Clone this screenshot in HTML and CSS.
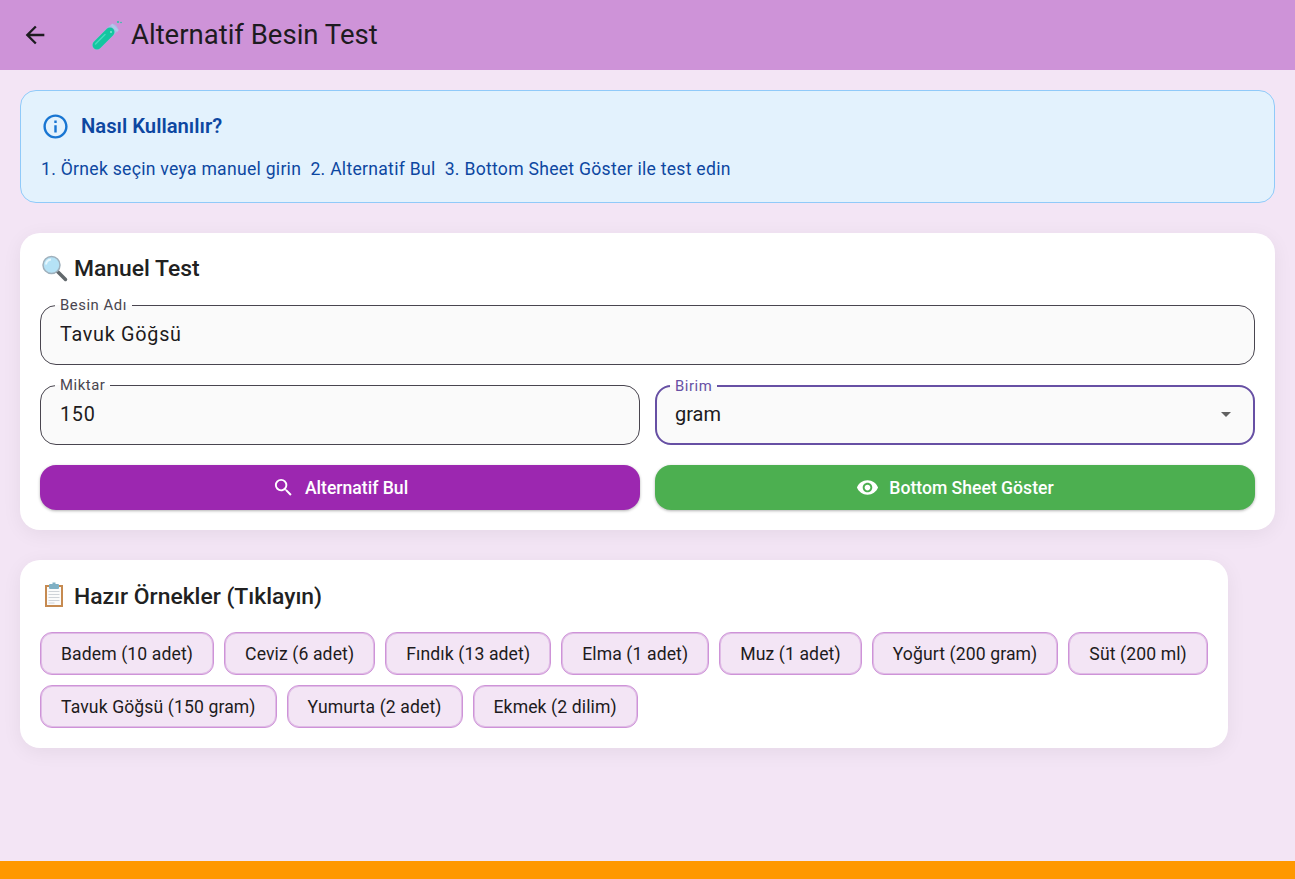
FILE: index.html
```html
<!DOCTYPE html>
<html lang="tr">
<head>
    <meta charset="UTF-8">
    <title>Alternatif Besin Test</title>
    <link rel="stylesheet" href="styles.css">
</head>
<body>
    <header class="app-bar">
        <button class="back-btn" type="button" aria-label="Geri">
            <svg width="28" height="28" viewBox="0 0 24 24"><path d="M20 11H7.830l5.590-5.590L12 4l-8 8 8 8 1.410-1.410L7.830 13H20v-2z"/></svg>
        </button>
        <h1 class="app-title">
            <svg class="emoji-tube" width="31" height="31" viewBox="0 0 31 31" fill="none" stroke-linecap="round">
                <path d="M6 25L22 9" stroke="#a9bde4" stroke-width="9.500"/>
                <path d="M6 25L19 12" stroke="#13c6a0" stroke-width="9"/>
                <path d="M4.500 24L14 14.500" stroke="#46dcbd" stroke-width="1.500"/>
                <path d="M20.500 4.500l6.500 6.500" stroke="#b4c6ea" stroke-width="2.500" stroke-linecap="butt"/>
                <circle cx="20" cy="12" r="1" fill="#7fe6d0"/>
                <circle cx="27" cy="2" r="1.100" fill="#26c6a6"/>
                <circle cx="30" cy="2.500" r=".8" fill="#26c6a6"/>
            </svg>
            Alternatif Besin Test
        </h1>
    </header>

    <main class="content">
        <section class="info-box">
            <div class="info-head">
                <svg width="29" height="29" viewBox="0 0 24 24" fill="#1976d2"><path d="M11 7h2v2h-2zm0 4h2v6h-2zm1-9C6.480 2 2 6.480 2 12s4.480 10 10 10 10-4.480 10-10S17.520 2 12 2zm0 18c-4.410 0-8-3.590-8-8s3.590-8 8-8 8 3.590 8 8-3.590 8-8 8z"/></svg>
                <span>Nasıl Kullanılır?</span>
            </div>
            <p class="info-text">1. Örnek seçin veya manuel girin&nbsp; 2. Alternatif Bul&nbsp; 3. Bottom Sheet Göster ile test edin</p>
        </section>

        <section class="card">
            <h2 class="card-title">
                <svg width="28" height="28" viewBox="0 0 28 28" fill="none">
                    <path d="M17.500 17.500l8 8" stroke="#62686c" stroke-width="3.500" stroke-linecap="round"/>
                    <circle cx="11.500" cy="11" r="8.500" fill="#b5e2f6" stroke="#9fb0bc" stroke-width="1.500"/>
                    <path d="M6 10.500a5.500 5.500 0 0 1 5-5" stroke="#e6f7fd" stroke-width="2"/>
                </svg>
                Manuel Test
            </h2>

            <fieldset class="field">
                <legend>Besin Adı</legend>
                <input type="text" value="Tavuk Göğsü">
            </fieldset>

            <div class="two-col">
                <fieldset class="field">
                    <legend>Miktar</legend>
                    <input type="text" value="150">
                </fieldset>
                <fieldset class="field field-focus">
                    <legend>Birim</legend>
                    <div class="select-value">
                        <span>gram</span>
                        <svg width="24" height="24" viewBox="0 0 24 24" fill="#616161"><path d="M7 10l5 5 5-5z"/></svg>
                    </div>
                </fieldset>
            </div>

            <div class="two-col">
                <button class="btn btn-purple" type="button">
                    <svg width="23" height="23" viewBox="0 0 24 24" fill="#fff"><path d="M15.500 14h-.79l-.28-.27A6.471 6.471 0 0 0 16 9.500 6.500 6.500 0 1 0 9.500 16c1.610 0 3.090-.59 4.230-1.570l.27.28v.79l5 4.990L20.490 19l-4.990-5zm-6 0C7.010 14 5 11.990 5 9.500S7.010 5 9.500 5 14 7.010 14 9.500 11.990 14 9.500 14z"/></svg>
                    Alternatif Bul
                </button>
                <button class="btn btn-green" type="button">
                    <svg width="23" height="23" viewBox="0 0 24 24" fill="#fff"><path d="M12 4.500C7 4.500 2.730 7.610 1 12c1.730 4.390 6 7.500 11 7.500s9.270-3.110 11-7.500c-1.730-4.390-6-7.500-11-7.500zM12 17c-2.760 0-5-2.240-5-5s2.240-5 5-5 5 2.240 5 5-2.240 5-5 5zm0-8c-1.660 0-3 1.340-3 3s1.340 3 3 3 3-1.340 3-3-1.340-3-3-3z"/></svg>
                    Bottom Sheet Göster
                </button>
            </div>
        </section>

        <section class="card card-examples">
            <h2 class="card-title">
                <svg width="28" height="28" viewBox="0 0 28 28">
                    <rect x="5" y="3" width="18" height="22" fill="#c68a50"/>
                    <rect x="7" y="5" width="14" height="18" fill="#fbfbfb"/>
                    <rect x="9" y="2" width="10" height="5" rx="1" fill="#7fb0c4"/>
                    <rect x="12.500" y="0.500" width="3" height="2" fill="#7fb0c4"/>
                    <path d="M8.500 9.500h11M8.500 12.500h11M8.500 15.500h11M8.500 18.500h11M8.500 21h6" stroke="#cfd3d8" stroke-width="1"/>
                </svg>
                Hazır Örnekler (Tıklayın)
            </h2>
            <div class="chips">
                <button class="chip" type="button">Badem (10 adet)</button>
                <button class="chip" type="button">Ceviz (6 adet)</button>
                <button class="chip" type="button">Fındık (13 adet)</button>
                <button class="chip" type="button">Elma (1 adet)</button>
                <button class="chip" type="button">Muz (1 adet)</button>
                <button class="chip" type="button">Yoğurt (200 gram)</button>
                <button class="chip" type="button">Süt (200 ml)</button>
                <button class="chip" type="button">Tavuk Göğsü (150 gram)</button>
                <button class="chip" type="button">Yumurta (2 adet)</button>
                <button class="chip" type="button">Ekmek (2 dilim)</button>
            </div>
        </section>
    </main>

    <div class="bottom-strip"></div>
</body>
</html>
```

FILE: styles.css
```css
* {
    box-sizing: border-box;
}

html,
body {
    height: 100%;
}

body {
    margin: 0;
    display: flex;
    flex-direction: column;
    overflow: hidden;
    background-color: #f3e5f5;
    color: #1d1b20;
    font-family: Roboto, "Liberation Sans", sans-serif;
}

/* App bar */
.app-bar {
    display: flex;
    align-items: center;
    flex: 0 0 70px;
    padding-left: 21px;
    background-color: #ce93d8;
}

.back-btn {
    display: flex;
    width: 28px;
    height: 28px;
    padding: 0;
    border: none;
    background: none;
    fill: #1d1b20;
}

.app-title {
    display: flex;
    align-items: center;
    gap: 9px;
    margin: 0 0 0 42px;
    font-size: 27.5px;
    font-weight: 400;
    line-height: 36px;
}

/* Page content */
.content {
    flex: 1;
    padding: 20px;
}

.info-box {
    height: 113px;
    padding: 20px;
    border: 1px solid #90caf9;
    border-radius: 16px;
    background-color: #e3f2fd;
    color: #0d47a1;
}

.info-head {
    display: flex;
    align-items: center;
    gap: 11px;
    height: 30px;
    font-size: 20.24px;
    font-weight: 600;
}

.info-text {
    margin: 16px 0 0;
    font-size: 17.6px;
    line-height: 24px;
    letter-spacing: 0.27px;
}

.card {
    margin-top: 30px;
    padding: 20px;
    border-radius: 20px;
    background-color: #fff;
    box-shadow: 0 4px 20px rgba(0, 0, 0, 0.06);
}

.card-examples {
    width: 1208px;
}

.card-examples .card-title {
    padding-top: 2px;
}

.card-title {
    display: flex;
    align-items: center;
    gap: 6px;
    height: 30px;
    margin: 0 0 22px;
    font-size: 22.88px;
    font-weight: 500;
    color: #212121;
}

/* Form fields */
.field {
    min-width: 0;
    height: 68px;
    margin: -8px 0 0;
    padding: 0 19px;
    border: 1px solid #49454f;
    border-radius: 16px;
    background-color: #fafafa;
}

.field legend {
    padding: 0 5px;
    margin-left: -5px;
    font-size: 14.85px;
    line-height: 16px;
    letter-spacing: 0.55px;
    color: #49454f;
}

.field input {
    display: block;
    width: 100%;
    height: 42px;
    padding: 0;
    border: none;
    outline: none;
    background: none;
    font-family: inherit;
    font-size: 19.8px;
    letter-spacing: 0.73px;
    color: #1d1b20;
}

.field-focus {
    height: 67px;
    margin-top: -7px;
    padding: 0 18px;
    border: 2px solid #6750a4;
}

.field-focus legend {
    color: #6750a4;
}

.select-value {
    display: flex;
    align-items: center;
    justify-content: space-between;
    height: 40px;
    margin-right: -3px;
    font-size: 20px;
}

.two-col {
    display: grid;
    grid-template-columns: 1fr 1fr;
    gap: 15px;
    margin-top: 20px;
}

/* Buttons */
.btn {
    display: flex;
    align-items: center;
    justify-content: center;
    gap: 10px;
    height: 45px;
    border: none;
    border-radius: 16px;
    font-family: inherit;
    font-size: 17.6px;
    font-weight: 500;
    color: #fff;
    box-shadow: 0 1px 3px rgba(0, 0, 0, 0.3);
}

.btn-purple {
    background-color: #9c27b0;
}

.btn-green {
    background-color: #4caf50;
}

/* Example chips */
.chips {
    display: flex;
    flex-wrap: wrap;
    gap: 10px;
    margin-right: -4px;
}

.chip {
    height: 43px;
    padding: 0 20px;
    border: 1px solid #ce93d8;
    border-radius: 12px;
    background-color: #f3e5f5;
    box-shadow: inset 0 0 0 1px rgba(206, 147, 216, 0.5);
    font-family: inherit;
    font-size: 17.6px;
    letter-spacing: 0.11px;
    color: #1d1b20;
}

.bottom-strip {
    flex: 0 0 18px;
    background-color: #ff9800;
}
```
